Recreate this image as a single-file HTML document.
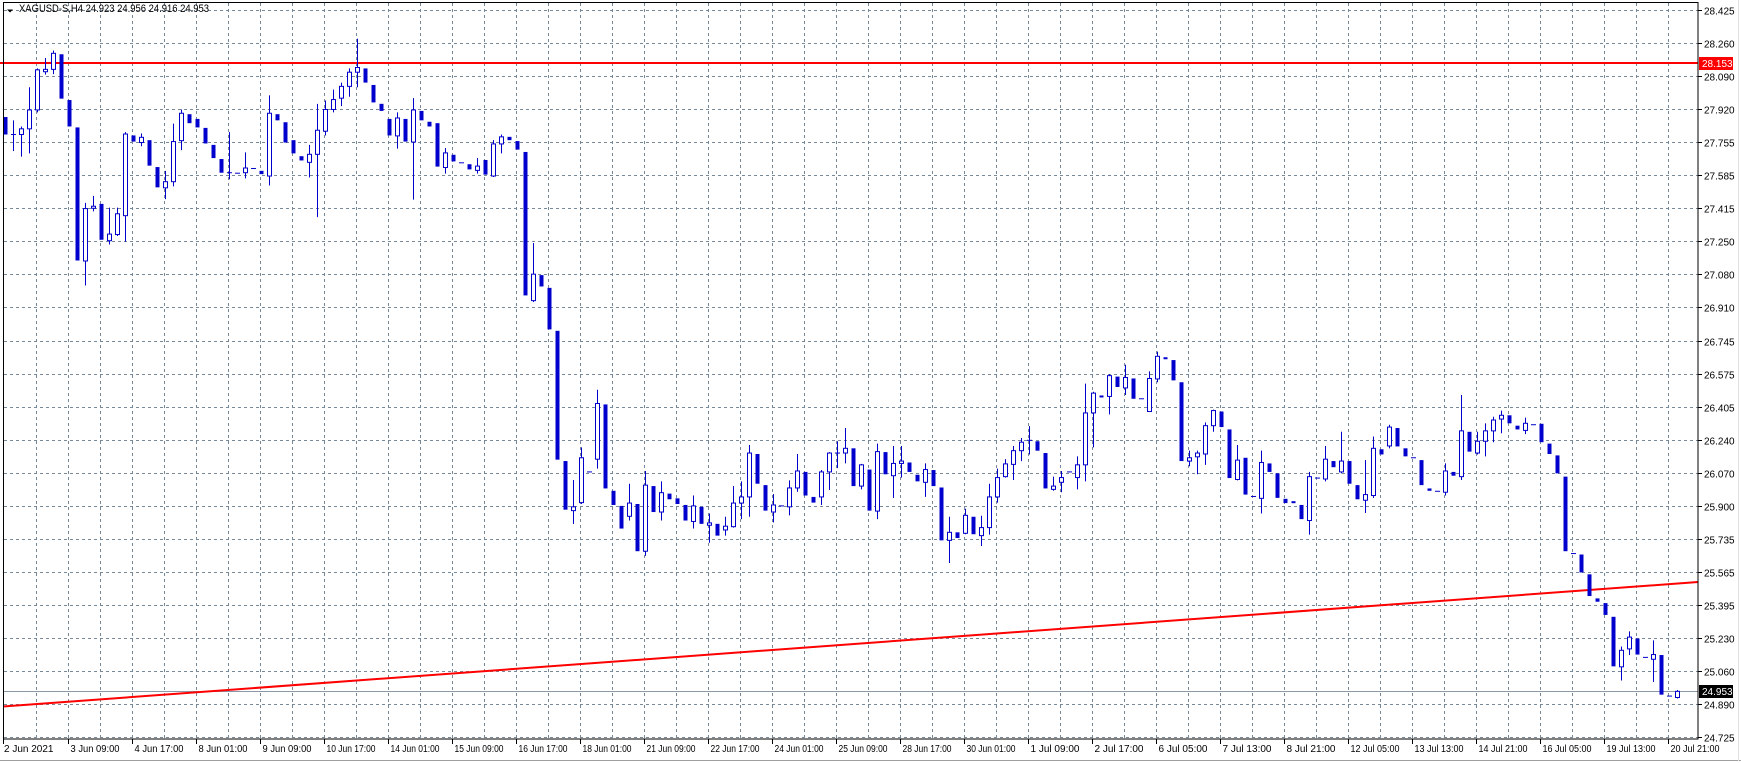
<!DOCTYPE html>
<html><head><meta charset="utf-8"><style>
html,body{margin:0;padding:0;background:#fff;overflow:hidden}
svg{display:block}
text{font-family:"Liberation Sans","DejaVu Sans",sans-serif;font-size:10px;fill:#000}
</style></head><body>
<svg id="s" width="1741" height="763" xmlns="http://www.w3.org/2000/svg">
<rect width="1741" height="763" fill="#fff"/>
<g id="grid"></g>
<line x1="3" y1="691.5" x2="1698" y2="691.5" stroke="#8b98a8" stroke-width="1"/>
<line x1="0" y1="63" x2="1698" y2="63" stroke="#ff0000" stroke-width="2"/>
<line x1="3" y1="706.5" x2="1698" y2="582" stroke="#ff0000" stroke-width="2"/>
<g id="candles"></g>
<rect x="3.5" y="2.5" width="1694.5" height="736.5" fill="none" stroke="#000" stroke-width="1"/>
<g id="axis"></g>
<path d="M7 9.5 L13 9.5 L10 12.5 Z" fill="#000"/>
<text x="19" y="12" style="font-size:11px" textLength="190" lengthAdjust="spacingAndGlyphs">XAGUSD-S,H4  24.923 24.956 24.916 24.953</text>
<rect x="1699" y="57" width="34" height="13" fill="#ff0000"/>
<text x="1702" y="67" style="fill:#fff">28.153</text>
<rect x="1699" y="685" width="34" height="13" fill="#000"/>
<text x="1702" y="695" style="fill:#fff">24.953</text>
<line x1="0" y1="760.5" x2="1741" y2="760.5" stroke="#a0a0a0"/>
<line x1="1738.5" y1="0" x2="1738.5" y2="761" stroke="#e0e0e0"/>
</svg>
<script>
var NS="http://www.w3.org/2000/svg";
function el(p,n,a){var e=document.createElementNS(NS,n);for(var k in a)e.setAttribute(k,a[k]);p.appendChild(e);return e;}
var g=document.getElementById('grid'),ax=document.getElementById('axis'),cg=document.getElementById('candles');
var prices=["28.425","28.260","28.090","27.920","27.755","27.585","27.415","27.250","27.080","26.910","26.745","26.575","26.405","26.240","26.070","25.900","25.735","25.565","25.395","25.230","25.060","24.890","24.725"];
for(var k=0;k<23;k++){var y=Math.round(10+33.05*k)+0.5;
 el(g,'line',{x1:4,y1:y,x2:1698,y2:y,stroke:'#778899','stroke-dasharray':'3,3'});
 el(ax,'line',{x1:1698,y1:y,x2:1702,y2:y,stroke:'#000'});
 var t=el(ax,'text',{x:1704,y:y+4});t.textContent=prices[k];}
for(var k=0;k<52;k++){var x=36+32*k+0.5;
 el(g,'line',{x1:x,y1:3,x2:x,y2:739,stroke:'#778899','stroke-dasharray':'3,3'});}
var dates=["3 Jun 09:00","4 Jun 17:00","8 Jun 01:00","9 Jun 09:00","10 Jun 17:00","14 Jun 01:00","15 Jun 09:00","16 Jun 17:00","18 Jun 01:00","21 Jun 09:00","22 Jun 17:00","24 Jun 01:00","25 Jun 09:00","28 Jun 17:00","30 Jun 01:00","1 Jul 09:00","2 Jul 17:00","6 Jul 05:00","7 Jul 13:00","8 Jul 21:00","12 Jul 05:00","13 Jul 13:00","14 Jul 21:00","16 Jul 05:00","19 Jul 13:00","20 Jul 21:00"];
var t0=el(ax,'text',{x:4,y:752});t0.textContent="2 Jun 2021";
el(ax,'line',{x1:3.5,y1:739,x2:3.5,y2:744,stroke:'#000'});
for(var j=0;j<dates.length;j++){var x=68+64*j+0.5;
 el(ax,'line',{x1:x,y1:739,x2:x,y2:744,stroke:'#000'});
 var t=el(ax,'text',{x:x+2,y:752,textLength:49,lengthAdjust:'spacingAndGlyphs'});t.textContent=dates[j];}
var D="d,248,285|x,285,255,320|u,273,285,268,332|u,233,273,185,325|u,148,233,145,238|u,147,152,123,158|u,113,147,107,157|d,115,209|d,212,268|d,270,552|u,442,553,430,605|u,437,441,415,448|d,432,508|u,496,510,440,518|u,453,497,440,500|u,284,457,280,512|d,287,300|u,291,302,283,310|d,297,351|d,354,397|u,385,398,362,422|u,300,385,262,395|u,240,298,232,318|d,242,261|d,252,270|d,271,304|d,307,335|d,337,366|x,366,280,380|x,367,367,367|u,356,366,323,378|x,357,357,357|d,362,369|u,240,373,202,393|d,242,255|d,259,302|d,297,325|d,331,340|u,327,344,307,376|u,276,327,220,460|u,232,278,213,287|u,211,232,190,238|u,183,208,175,225|u,153,183,145,205|u,143,153,82,185|d,145,175|d,180,217|d,220,235|d,252,287|u,250,288,238,315|d,252,300|u,233,301,208,423|d,235,255|d,258,268|d,261,353|u,324,355,314,368|d,328,342|x,345,345,345|d,348,359|u,352,361,335,368|d,339,370|u,305,373,297,375|u,290,305,285,325|d,290,297|d,299,317|d,322,626|u,581,637,515,640|d,583,607|d,610,698|d,701,974|d,977,1080|u,1074,1082,1017,1110|u,970,1065,948,1068|x,1000,1000,1000|u,855,973,826,993|d,857,1035|d,1040,1070|d,1072,1120|u,1066,1094,1025,1103|d,1068,1168|u,1028,1168,998,1178|d,1030,1085|u,1044,1085,1020,1103|d,1046,1058|d,1056,1068|d,1070,1103|u,1072,1105,1050,1120|d,1074,1110|u,1108,1113,1088,1150|d,1110,1135|u,1115,1123,1095,1135|u,1066,1116,1030,1118|u,1053,1066,1020,1100|u,960,1053,943,1095|d,962,1025|d,1028,1082|u,1070,1085,1047,1107|x,1072,1072,1072|u,1034,1074,1018,1092|u,998,1034,962,1042|d,1000,1050|d,1053,1065|u,1000,1053,996,1070|u,960,1000,958,1038|x,960,935,992|u,950,960,907,982|d,950,1030|u,985,1030,983,1037|d,995,1082|u,957,1083,940,1100|d,958,1005|u,982,1008,945,1055|u,977,982,945,1012|d,980,1000|d,1006,1020|u,995,1022,982,1053|d,996,1030|d,1033,1145|u,1128,1145,1095,1193|d,1128,1140|u,1092,1130,1078,1132|d,1095,1132|u,1118,1135,1093,1157|u,1053,1118,1025,1133|u,1012,1053,993,1065|u,983,1010,973,1012|u,955,984,945,1017|u,937,955,928,977|x,933,903,963|d,935,955|d,960,1035|u,1030,1037,1010,1040|u,1012,1022,998,1043|x,1000,1000,1000|u,985,1012,967,1037|u,875,985,813,1020|u,833,875,830,948|d,838,842|u,796,840,793,878|d,798,820|u,800,822,773,837|d,802,845|x,845,845,845|u,802,872,787,873|u,755,803,745,810|d,757,760|d,763,806|d,810,977|u,970,977,955,988|u,960,968,955,1005|u,902,962,895,985|u,870,902,868,915|d,872,905|d,910,1013|u,975,1016,943,1018|d,970,1048|x,1052,1052,1052|u,980,1056,955,1088|d,982,1000|d,1003,1055|d,1057,1066|d,1062,1065|d,1070,1100|u,1010,1103,1000,1133|x,1013,1013,1013|u,973,1015,945,1020|d,977,990|u,977,1000,915,1003|d,977,1025|d,1028,1058|u,1048,1060,975,1087|u,950,1050,925,1055|d,952,963|u,905,945,900,950|d,907,946|d,950,967|x,970,970,970|d,975,1028|d,1035,1040|x,1041,1041,1041|u,998,1043,982,1050|d,1000,1008|u,913,1010,837,1017|d,915,957|u,935,960,915,963|u,913,935,897,967|u,890,913,883,937|u,880,888,870,918|d,880,897|d,902,910|u,897,912,885,920|x,900,900,900|d,898,937|d,940,962|d,965,1003|d,1010,1168|x,1173,1173,1173|d,1175,1213|d,1217,1263|d,1268,1275|d,1278,1303|d,1307,1412|u,1378,1413,1370,1442|u,1350,1375,1338,1388|d,1353,1387|x,1393,1393,1393|u,1387,1397,1357,1445|d,1388,1472|x,1475,1475,1475|u,1465,1478,1462,1480";
var C="#0000cd",S=2.119;
D.split('|').forEach(function(s,i){var p=s.split(','),t=p[0],v=p.slice(1).map(function(n){return (+n)/S;});
 var cx=Math.round(4.67+8*i);
 if(t=='d'){el(cg,'rect',{x:cx-1.5,y:v[0],width:4,height:Math.max(2,v[1]-v[0]),fill:C});}
 else if(t=='u'){el(cg,'line',{x1:cx+0.5,y1:v[2],x2:cx+0.5,y2:v[3],stroke:C});
  el(cg,'rect',{x:cx-1.5,y:v[0],width:4,height:Math.max(2,v[1]-v[0]),fill:'#fff',stroke:C,'stroke-width':1});}
 else{ if(v[1]!=v[2])el(cg,'line',{x1:cx+0.5,y1:v[1],x2:cx+0.5,y2:v[2],stroke:C});
  el(cg,'line',{x1:cx-2,y1:v[0],x2:cx+3,y2:v[0],stroke:C});}
});
</script>
</body></html>
